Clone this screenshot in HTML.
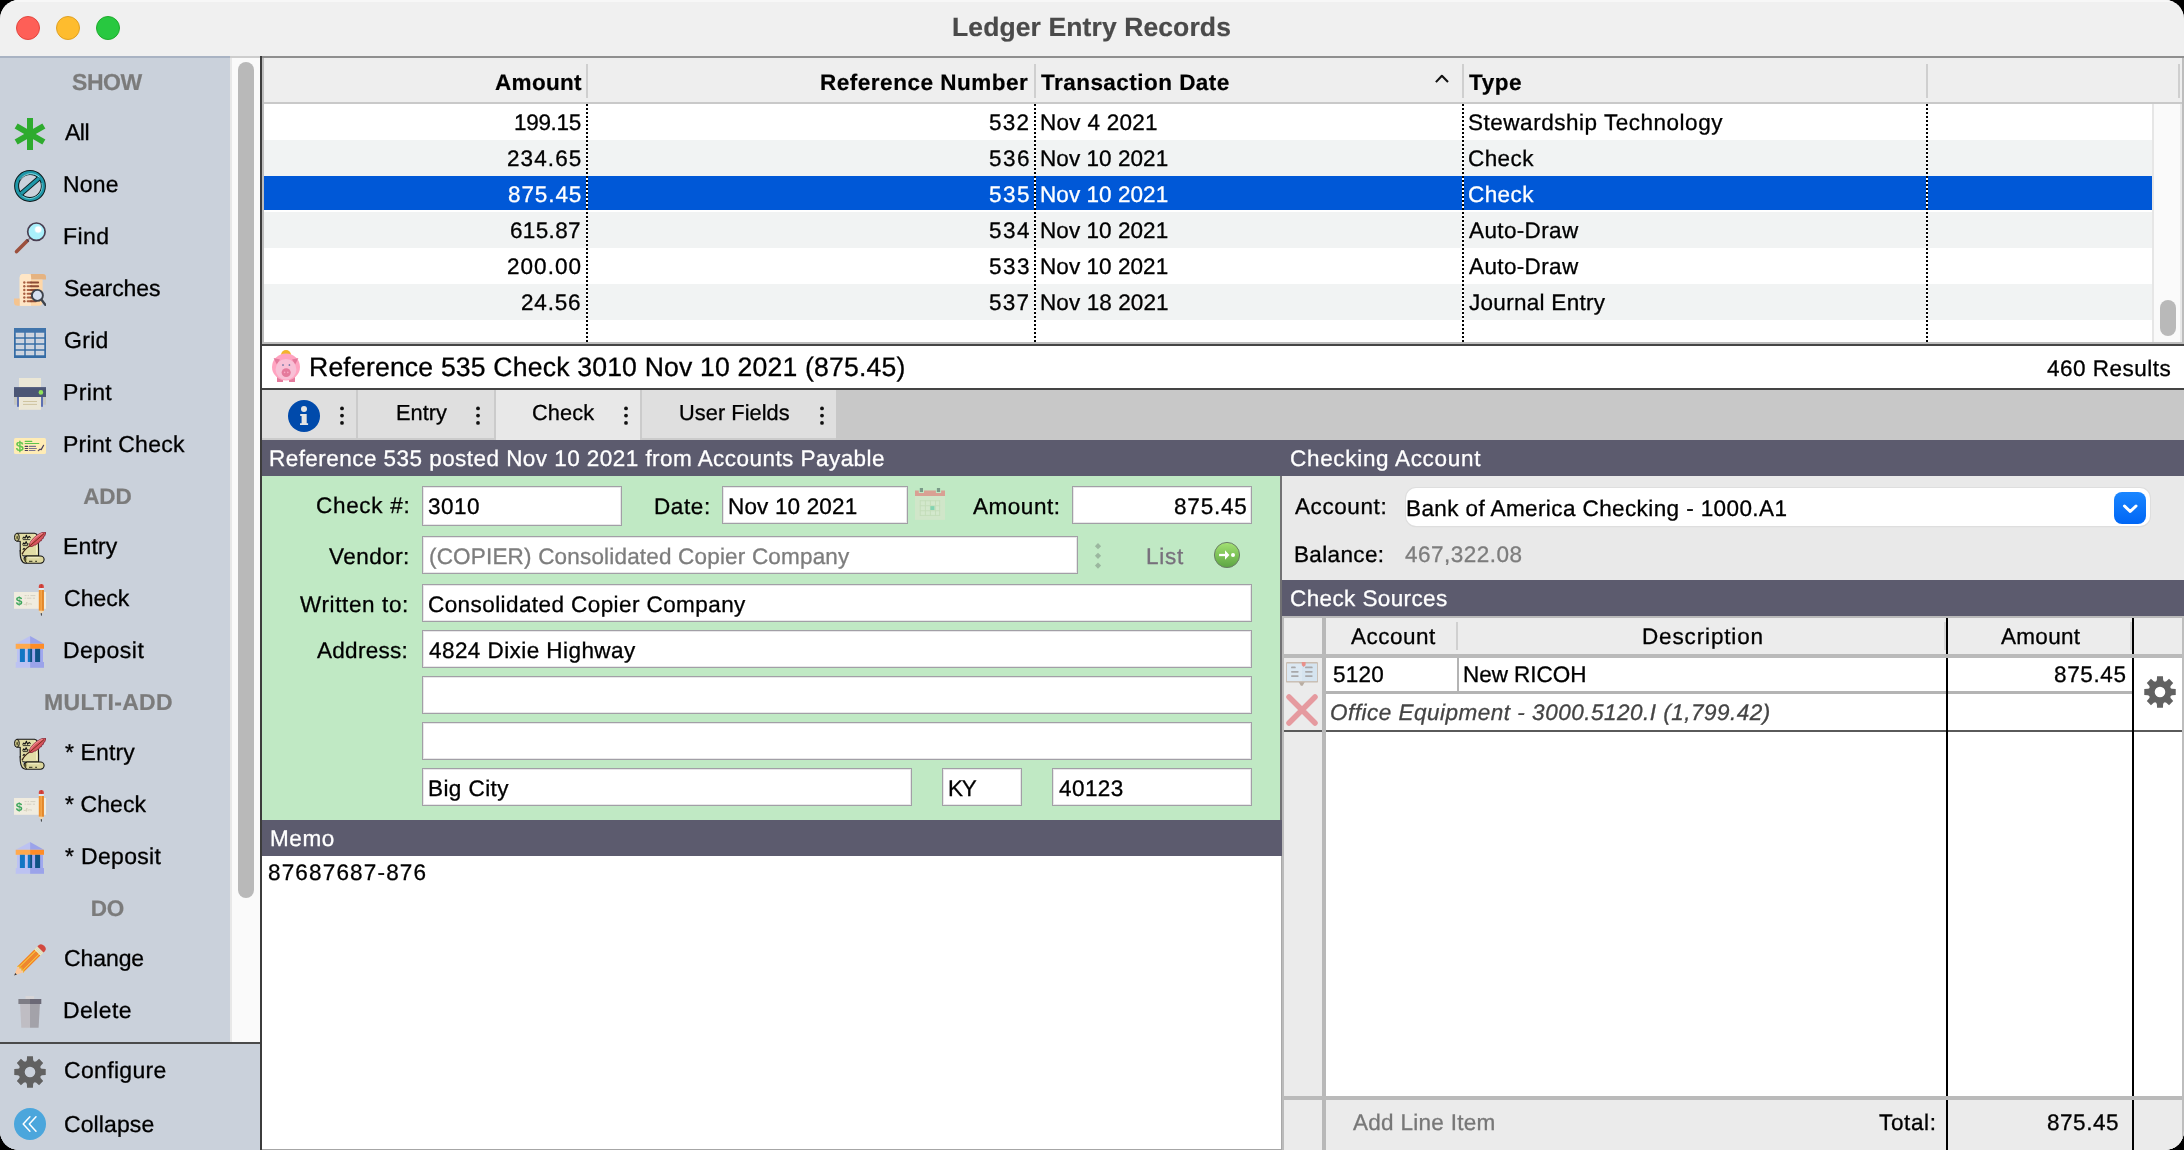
<!DOCTYPE html>
<html>
<head>
<meta charset="utf-8">
<title>Ledger Entry Records</title>
<style>
*{box-sizing:border-box;margin:0;padding:0}
html,body{width:2184px;height:1150px;background:#000;overflow:hidden}
body{font-family:"Liberation Sans",sans-serif;font-size:22.5px;color:#000;-webkit-font-smoothing:antialiased;text-rendering:geometricPrecision}
#win{position:absolute;left:0;top:0;width:2184px;height:1150px;background:#e9e9e9;border-radius:19px;overflow:hidden;will-change:transform}
.abs{position:absolute}
svg{display:block}
.t{position:absolute;white-space:nowrap;line-height:30px;height:30px;-webkit-text-stroke:0.3px}
.b{font-weight:bold;-webkit-text-stroke:0.2px}
.i{font-style:italic}
#titlebar{position:absolute;left:0;top:0;width:2184px;height:56px;background:#f0f0f0}
.tl{position:absolute;top:16px;width:24px;height:24px;border-radius:50%}
#sidebar{position:absolute;left:0;top:58px;width:230px;height:1092px;background:#cad1db}
.ic{position:absolute;left:14px;width:32px;height:32px}
.hsep{position:absolute;top:64px;width:2px;height:34px;background:#cfcfcf}
.dot{position:absolute;top:104px;width:2px;height:238px;background:repeating-linear-gradient(to bottom,#000 0,#000 2px,#fff 2px,#fff 4px)}
.bar{position:absolute;background:#5c5b6e;height:36px}
.inp{position:absolute;background:#fff;border:1px solid #a29fa6;box-shadow:inset 0 0 0 1px rgba(162,159,166,.25)}
</style>
</head>
<body>
<div id="win">
<div id="titlebar">
<div class="abs" style="left:0;top:0;width:100%;height:2px;background:#f7f7f7"></div>
<div class="tl" style="left:16px;background:#fe5f57;border:1px solid #e2463f"></div>
<div class="tl" style="left:56px;background:#febc2e;border:1px solid #dfa023"></div>
<div class="tl" style="left:96px;background:#28c840;border:1px solid #1eab2c"></div>
</div>
<div class="t b" id="title" style="left:952px;top:12px;font-size:26.5px;letter-spacing:0.106px;color:#4a4a4a;">Ledger Entry Records</div>
<div class="abs" style="left:0px;top:56px;width:230px;height:2px;background:#a9b3c3;"></div>
<div class="abs" style="left:230px;top:56px;width:30px;height:2px;background:#cdcdcd;"></div>
<div class="abs" style="left:260px;top:56px;width:1924px;height:2px;background:#8f8f8f;"></div>
<div id="sidebar"></div>
<div class="abs" style="left:0px;top:1044px;width:260px;height:106px;background:#cad1db;"></div>
<div class="ic" style="top:118px"><svg width="32" height="32" viewBox="0 0 32 32"><g fill="#2eab2e"><rect x="13" y="0" width="6" height="32"/><rect x="13" y="0" width="6" height="32" transform="rotate(60 16 16)"/><rect x="13" y="0" width="6" height="32" transform="rotate(120 16 16)"/></g></svg></div>
<div class="t " id="sb_All" style="left:65px;top:117px;font-size:23px;letter-spacing:-0.495px;">All</div>
<div class="ic" style="top:170px"><svg width="32" height="32" viewBox="0 0 32 32"><circle cx="16" cy="16" r="13.4" fill="none" stroke="#0c1a1c" stroke-width="5"/><path d="M7.2 23.6 L24.8 8.4" stroke="#0c1a1c" stroke-width="5.2"/><circle cx="16" cy="16" r="13.4" fill="none" stroke="#1f97a8" stroke-width="3"/><path d="M7 23.8 L25 8.2" stroke="#1f97a8" stroke-width="3.2"/><path d="M6.3 9.5 A12.6 12.6 0 0 1 25.5 7.2" fill="none" stroke="#9eeaf0" stroke-width="0.9"/><path d="M27.8 13 A12.6 12.6 0 0 1 8.5 26.3" fill="none" stroke="#9eeaf0" stroke-width="0.8" opacity=".8"/></svg></div>
<div class="t " id="sb_None" style="left:63px;top:169px;font-size:23px;letter-spacing:0.149px;">None</div>
<div class="ic" style="top:222px"><svg width="32" height="32" viewBox="0 0 32 32"><path d="M16.4 15.6 L13.5 18.5" stroke="#8c8fa0" stroke-width="1.6"/><path d="M13.3 18.8 L2.6 29.6" stroke="#9c503d" stroke-width="3.6" stroke-linecap="round"/><path d="M12.6 17.4 L14.8 19.6" stroke="#4a3f52" stroke-width="1.2"/><circle cx="22.4" cy="9.7" r="8.7" fill="#aaf0fb" stroke="#4a3f52" stroke-width="1.7"/><circle cx="24.2" cy="7.6" r="3" fill="#fff"/><circle cx="24.2" cy="7.6" r="3.8" fill="#fff" opacity=".35"/></svg></div>
<div class="t " id="sb_Find" style="left:63px;top:221px;font-size:23px;letter-spacing:0.399px;">Find</div>
<div class="ic" style="top:274px"><svg width="32" height="32" viewBox="0 0 32 32"><path d="M17 0 H29 A3 3 0 0 1 32 3 V5.6 H17Z" fill="#e5b381"/><path d="M10 0 H17 V5.6 H17 Z" fill="#f3cfa0"/><path d="M9.5 0 A3.8 3.8 0 0 0 5.7 3.8 V31.8 H17 V0Z" fill="#ffe6c6"/><path d="M10 0 H15 Q17.3 0.5 17.3 5.6 H17 V31.8 H25 A3.6 3.6 0 0 0 28.6 28 V5.6 H17 V0Z" fill="#ffd7a8"/><path d="M9.5 0 A3.8 3.8 0 0 0 5.7 3.8 V31.8 H17 V5.6 Q17 0.3 13.5 0Z" fill="#ffe6c6"/><path d="M0 24.6 H5.7 V31.8 H3.5 A3.5 3.5 0 0 1 0 28.3Z" fill="#f5c48f"/><g stroke="#a85f42" stroke-width="1.9" stroke-linecap="round"><path d="M13.6 8.5H17M13.6 12.2H17M13.6 16H17M13.6 19.7H17M13.6 23.5H17M13.6 27.2H17"/></g><g stroke="#8c4a35" stroke-width="1.9" stroke-linecap="round"><path d="M17 8.5H24.2M17 12.2H24.2M17 16H22M17 19.7H19M17 23.5H19M17 27.2H22"/></g><g fill="#a85f42"><circle cx="10.3" cy="8.5" r="1.2"/><circle cx="10.3" cy="12.2" r="1.2"/><circle cx="10.3" cy="16" r="1.2"/><circle cx="10.3" cy="19.7" r="1.2"/><circle cx="10.3" cy="23.5" r="1.2"/><circle cx="10.3" cy="27.2" r="1.2"/></g><path d="M27.3 25.6 L31.3 30.8" stroke="#3d434d" stroke-width="2.4" stroke-linecap="round"/><circle cx="23.4" cy="21.4" r="5.5" fill="#d6e0f0" stroke="#3d434d" stroke-width="1.9"/></svg></div>
<div class="t " id="sb_Searches" style="left:64px;top:273px;font-size:23px;letter-spacing:-0.108px;">Searches</div>
<div class="ic" style="top:327px"><svg width="32" height="32" viewBox="0 0 32 32"><rect x="0" y="1" width="32" height="30" fill="#356ca5"/><rect x="0" y="1" width="32" height="5.5" fill="#4074ab"/><g fill="#ccd3de" stroke="#d9dfe8" stroke-width="0.5"><rect x="2" y="6" width="8" height="4"/><rect x="12" y="6" width="8" height="4"/><rect x="22" y="6" width="8" height="4"/><rect x="2" y="12" width="8" height="4"/><rect x="12" y="12" width="8" height="4"/><rect x="22" y="12" width="8" height="4"/><rect x="2" y="18" width="8" height="4"/><rect x="12" y="18" width="8" height="4"/><rect x="22" y="18" width="8" height="4"/><rect x="2" y="24" width="8" height="4"/><rect x="12" y="24" width="8" height="4"/><rect x="22" y="24" width="8" height="4"/></g></svg></div>
<div class="t " id="sb_Grid" style="left:64px;top:325px;font-size:23px;letter-spacing:0.303px;">Grid</div>
<div class="ic" style="top:378px"><svg width="32" height="32" viewBox="0 0 32 32"><rect x="5" y="0" width="22" height="10" fill="#ebe7d6"/><rect x="0" y="19" width="3" height="7.7" fill="#c5c7c1"/><rect x="29" y="19" width="3" height="7.7" fill="#c5c7c1"/><rect x="3" y="19" width="2" height="9.8" fill="#5d70b3"/><rect x="27" y="19" width="2" height="9.8" fill="#5d70b3"/><rect x="5" y="19" width="22" height="12.8" fill="#ebe7d6"/><rect x="5" y="19" width="1.2" height="12.8" fill="#f3ecd2"/><rect x="0" y="9.2" width="32" height="9.8" fill="#4b5675"/><rect x="0" y="9.2" width="32" height="1" fill="#566182"/><circle cx="26.9" cy="14.4" r="2.3" fill="#90e35a"/><rect x="9" y="23" width="14" height="1" fill="#cfc4a0"/><rect x="9" y="25.9" width="14" height="1" fill="#cfc4a0"/></svg></div>
<div class="t " id="sb_Print" style="left:63px;top:377px;font-size:23px;letter-spacing:0.358px;">Print</div>
<div class="ic" style="top:430px"><svg width="32" height="32" viewBox="0 0 32 32"><rect x="0" y="8" width="32" height="16" rx="1.6" fill="#ffecb5"/><text x="5.7" y="20.9" font-family="Liberation Sans" font-size="13.5" fill="#5ec44a" stroke="#5ec44a" stroke-width="0.4" text-anchor="middle">$</text><g stroke="#5ec44a" stroke-width="1.1" stroke-linecap="round"><path d="M11.2 11.4H17.8M11.2 13.5H24.8"/></g><g stroke="#4a3f5c" stroke-width="1.1" stroke-linecap="round"><path d="M11.2 16.4H13.6M11.2 18.5H13.6M11.2 20.5H13.6"/></g><g stroke="#7a7590" stroke-width="1.1" stroke-linecap="round"><path d="M15.3 16.4H21.5M15.3 18.5H22.4M15.3 20.5H21"/></g><path d="M24.3 20.6 L26 19.2 L27.2 19.6 L29.6 15.3" fill="none" stroke="#4a3f5c" stroke-width="1.2" stroke-linecap="round" stroke-linejoin="round"/></svg></div>
<div class="t " id="sb_PrintCheck" style="left:63px;top:429px;font-size:23px;letter-spacing:0.260px;">Print Check</div>
<div class="ic" style="top:532px"><svg width="32" height="32" viewBox="0 0 32 32"><path d="M3 1.3 H20.5 Q23 1.6 23.6 4.2 Q24.8 12 24.6 24 H11 Q6.5 24 6.3 19 L6.2 9.3 H3.2 Z" fill="#e2dda6" stroke="#151515" stroke-width="1.1" stroke-linejoin="round"/><path d="M20 3 Q21.5 3.2 21.8 5 Q22.6 12 22.5 22" fill="none" stroke="#f2efc8" stroke-width="1"/><ellipse cx="2.9" cy="5.3" rx="2.4" ry="3.9" fill="#cdc78a" stroke="#151515" stroke-width="1"/><ellipse cx="3.2" cy="5.6" rx="0.9" ry="1.8" fill="#5e5a30"/><path d="M6.2 18 Q5.6 30.5 11.5 31.2 H26.5 A3.6 3.6 0 0 0 26.5 24 H13 Q10 24.2 10 27.5" fill="#dcd79e" stroke="#151515" stroke-width="1.1" stroke-linejoin="round"/><path d="M13 24.2 Q10.4 25 10.8 28 Q11.3 30.8 13 31" fill="#bdb77c" stroke="#151515" stroke-width="0.9"/><ellipse cx="11.3" cy="27.6" rx="0.9" ry="1.9" fill="#4e4a28"/><path d="M15 29.3 h3.4 M21.2 29.3 h1.8" stroke="#2a2a1a" stroke-width="1"/><path d="M14 25.7 H25.5" stroke="#f2efc8" stroke-width="1"/><g stroke="#111" stroke-width="1.05" fill="none" stroke-linejoin="round"><path d="M8.6 6.6 l1.2 -1.6 l1.2 1.2 l1.4 -3 l1.2 3 l1.6 -1.8 l1.4 1.4"/><path d="M8.8 7.6 h7.4" stroke-width="0.8"/><path d="M8.6 12.6 l1.2 -1.8 l1.1 1.4 l1.3 -2.6 l1.1 2.8 l1.2 -0.6"/><path d="M8.8 13.6 h5" stroke-width="0.8"/><path d="M8.8 17.8 l1.2 -1.6 l0.9 1.2"/></g><path d="M8.2 22.2 Q10 17.5 15.6 14" stroke="#3a2010" stroke-width="1.1" fill="none"/><path d="M15.2 14.2 L15.7 11.5 L17.4 8.6 L20.4 5.3 L23.9 2.7 L27.2 0.9 L29.8 0.2 L31.7 0.1 L31.4 2.1 L30.6 4.1 L29.7 4.4 L29.2 6.5 L28.2 6.6 L27.2 8.9 L26.1 8.9 L24.6 11.2 L23.5 11.2 L21.7 13.1 L20.6 13.1 L18.2 14.4 L15.5 14.6Z" fill="#d9555e" stroke="#7a2030" stroke-width="0.8" stroke-linejoin="round"/><path d="M16.7 11.0 L18.6 8.3 L21.7 5.2 L25.3 2.7 L28.3 1.2" fill="none" stroke="#ef8a8f" stroke-width="1.1" stroke-linecap="round"/><path d="M15.3 14.4 L30.1 1.5" stroke="#6e2a14" stroke-width="0.9"/></svg></div>
<div class="t " id="sb_Entry" style="left:63px;top:531px;font-size:23px;letter-spacing:0.152px;">Entry</div>
<div class="ic" style="top:584px"><svg width="32" height="32" viewBox="0 0 32 32"><rect x="0" y="8" width="32" height="16.8" fill="#f0ecdf"/><text x="5.1" y="20.9" font-family="Liberation Sans" font-weight="bold" font-size="12" fill="#3aa55a" text-anchor="middle">$</text><g stroke="#d2cfc2" stroke-width="1"><path d="M10.6 11.6h2M13.6 11.6h1.4M16.4 11.6h5M10.6 14.2h1.2M12.8 14.2h4.6M18.8 14.2h2.2"/></g><path d="M9.6 20.3 l2 0.3 l1.4 -2.6 l-0.6 3.6 M13.6 20.2 q2 -0.8 4.4 0" stroke="#d2cdb8" stroke-width="0.8" fill="none"/><path d="M24.8 2 Q24.8 0 27.3 0 Q29.8 0 29.8 2 V4 H24.8Z" fill="#d6453d"/><rect x="26.9" y="0.2" width="0.9" height="3.8" fill="#c23a33"/><rect x="24.8" y="4" width="5" height="2" fill="#dfe9ef"/><rect x="24.8" y="6" width="5" height="20.8" fill="#f0922e"/><rect x="26.7" y="6" width="1.1" height="20.8" fill="#f7b35c"/><rect x="27.8" y="6" width="2" height="20.8" fill="#e3872a"/><path d="M24.8 26.8 H29.8 L27.9 29.6 H26.7Z" fill="#f0d8b0"/><path d="M26.7 29.2 H27.9 L27.6 31.8 H27Z" fill="#222"/></svg></div>
<div class="t " id="sb_Check" style="left:64px;top:583px;font-size:23px;letter-spacing:0.026px;">Check</div>
<div class="ic" style="top:636px"><svg width="32" height="32" viewBox="0 0 32 32"><path d="M16.1 0 L1.7 7.8 H16.1Z" fill="#bcc2f2"/><path d="M16.1 0 L30 7.8 H16.1Z" fill="#9ba3ea"/><rect x="3" y="12.8" width="13.1" height="13.2" fill="#bcc2f2"/><rect x="16.1" y="12.8" width="12.9" height="13.2" fill="#a0a8ee"/><rect x="1.7" y="26" width="14.4" height="5.8" fill="#bcc2f2"/><rect x="16.1" y="26" width="13.9" height="5.8" fill="#9ba3ea"/><rect x="1.7" y="7.8" width="14.4" height="5" fill="#ffa94d"/><rect x="16.1" y="7.8" width="13.9" height="5" fill="#ff8c26"/><rect x="5.9" y="12.8" width="5" height="13.2" fill="#1176c4"/><rect x="13.8" y="12.8" width="2.3" height="13.2" fill="#1176c4"/><rect x="16.1" y="12.8" width="2" height="13.2" fill="#0f5285"/><rect x="21.1" y="12.8" width="5" height="13.2" fill="#0f5285"/></svg></div>
<div class="t " id="sb_Deposit" style="left:63px;top:635px;font-size:23px;letter-spacing:0.472px;">Deposit</div>
<div class="ic" style="top:738px"><svg width="32" height="32" viewBox="0 0 32 32"><path d="M3 1.3 H20.5 Q23 1.6 23.6 4.2 Q24.8 12 24.6 24 H11 Q6.5 24 6.3 19 L6.2 9.3 H3.2 Z" fill="#e2dda6" stroke="#151515" stroke-width="1.1" stroke-linejoin="round"/><path d="M20 3 Q21.5 3.2 21.8 5 Q22.6 12 22.5 22" fill="none" stroke="#f2efc8" stroke-width="1"/><ellipse cx="2.9" cy="5.3" rx="2.4" ry="3.9" fill="#cdc78a" stroke="#151515" stroke-width="1"/><ellipse cx="3.2" cy="5.6" rx="0.9" ry="1.8" fill="#5e5a30"/><path d="M6.2 18 Q5.6 30.5 11.5 31.2 H26.5 A3.6 3.6 0 0 0 26.5 24 H13 Q10 24.2 10 27.5" fill="#dcd79e" stroke="#151515" stroke-width="1.1" stroke-linejoin="round"/><path d="M13 24.2 Q10.4 25 10.8 28 Q11.3 30.8 13 31" fill="#bdb77c" stroke="#151515" stroke-width="0.9"/><ellipse cx="11.3" cy="27.6" rx="0.9" ry="1.9" fill="#4e4a28"/><path d="M15 29.3 h3.4 M21.2 29.3 h1.8" stroke="#2a2a1a" stroke-width="1"/><path d="M14 25.7 H25.5" stroke="#f2efc8" stroke-width="1"/><g stroke="#111" stroke-width="1.05" fill="none" stroke-linejoin="round"><path d="M8.6 6.6 l1.2 -1.6 l1.2 1.2 l1.4 -3 l1.2 3 l1.6 -1.8 l1.4 1.4"/><path d="M8.8 7.6 h7.4" stroke-width="0.8"/><path d="M8.6 12.6 l1.2 -1.8 l1.1 1.4 l1.3 -2.6 l1.1 2.8 l1.2 -0.6"/><path d="M8.8 13.6 h5" stroke-width="0.8"/><path d="M8.8 17.8 l1.2 -1.6 l0.9 1.2"/></g><path d="M8.2 22.2 Q10 17.5 15.6 14" stroke="#3a2010" stroke-width="1.1" fill="none"/><path d="M15.2 14.2 L15.7 11.5 L17.4 8.6 L20.4 5.3 L23.9 2.7 L27.2 0.9 L29.8 0.2 L31.7 0.1 L31.4 2.1 L30.6 4.1 L29.7 4.4 L29.2 6.5 L28.2 6.6 L27.2 8.9 L26.1 8.9 L24.6 11.2 L23.5 11.2 L21.7 13.1 L20.6 13.1 L18.2 14.4 L15.5 14.6Z" fill="#d9555e" stroke="#7a2030" stroke-width="0.8" stroke-linejoin="round"/><path d="M16.7 11.0 L18.6 8.3 L21.7 5.2 L25.3 2.7 L28.3 1.2" fill="none" stroke="#ef8a8f" stroke-width="1.1" stroke-linecap="round"/><path d="M15.3 14.4 L30.1 1.5" stroke="#6e2a14" stroke-width="0.9"/></svg></div>
<div class="t " id="sb_mEntry" style="left:65px;top:737px;font-size:23px;letter-spacing:0.120px;">* Entry</div>
<div class="ic" style="top:790px"><svg width="32" height="32" viewBox="0 0 32 32"><rect x="0" y="8" width="32" height="16.8" fill="#f0ecdf"/><text x="5.1" y="20.9" font-family="Liberation Sans" font-weight="bold" font-size="12" fill="#3aa55a" text-anchor="middle">$</text><g stroke="#d2cfc2" stroke-width="1"><path d="M10.6 11.6h2M13.6 11.6h1.4M16.4 11.6h5M10.6 14.2h1.2M12.8 14.2h4.6M18.8 14.2h2.2"/></g><path d="M9.6 20.3 l2 0.3 l1.4 -2.6 l-0.6 3.6 M13.6 20.2 q2 -0.8 4.4 0" stroke="#d2cdb8" stroke-width="0.8" fill="none"/><path d="M24.8 2 Q24.8 0 27.3 0 Q29.8 0 29.8 2 V4 H24.8Z" fill="#d6453d"/><rect x="26.9" y="0.2" width="0.9" height="3.8" fill="#c23a33"/><rect x="24.8" y="4" width="5" height="2" fill="#dfe9ef"/><rect x="24.8" y="6" width="5" height="20.8" fill="#f0922e"/><rect x="26.7" y="6" width="1.1" height="20.8" fill="#f7b35c"/><rect x="27.8" y="6" width="2" height="20.8" fill="#e3872a"/><path d="M24.8 26.8 H29.8 L27.9 29.6 H26.7Z" fill="#f0d8b0"/><path d="M26.7 29.2 H27.9 L27.6 31.8 H27Z" fill="#222"/></svg></div>
<div class="t " id="sb_mCheck" style="left:65px;top:789px;font-size:23px;letter-spacing:0.071px;">* Check</div>
<div class="ic" style="top:842px"><svg width="32" height="32" viewBox="0 0 32 32"><path d="M16.1 0 L1.7 7.8 H16.1Z" fill="#bcc2f2"/><path d="M16.1 0 L30 7.8 H16.1Z" fill="#9ba3ea"/><rect x="3" y="12.8" width="13.1" height="13.2" fill="#bcc2f2"/><rect x="16.1" y="12.8" width="12.9" height="13.2" fill="#a0a8ee"/><rect x="1.7" y="26" width="14.4" height="5.8" fill="#bcc2f2"/><rect x="16.1" y="26" width="13.9" height="5.8" fill="#9ba3ea"/><rect x="1.7" y="7.8" width="14.4" height="5" fill="#ffa94d"/><rect x="16.1" y="7.8" width="13.9" height="5" fill="#ff8c26"/><rect x="5.9" y="12.8" width="5" height="13.2" fill="#1176c4"/><rect x="13.8" y="12.8" width="2.3" height="13.2" fill="#1176c4"/><rect x="16.1" y="12.8" width="2" height="13.2" fill="#0f5285"/><rect x="21.1" y="12.8" width="5" height="13.2" fill="#0f5285"/></svg></div>
<div class="t " id="sb_mDeposit" style="left:65px;top:841px;font-size:23px;letter-spacing:0.323px;">* Deposit</div>
<div class="ic" style="top:944px"><svg width="32" height="32" viewBox="0 0 32 32" style="overflow:visible"><g transform="translate(0.2 31.6) rotate(-44.8) scale(0.935 1.16)"><path d="M0 0 L9.5 -3.6 V3.6Z" fill="#ffc89a"/><path d="M0 0 L2.8 -1.05 V1.05Z" fill="#2b3440"/><path d="M9.2 -3.6 L11.5 -2.4 L9.8 -1.2 L11.5 0 L9.8 1.2 L11.5 2.4 L9.2 3.6 H35 V-3.6Z" fill="#f58220"/><rect x="10.5" y="-2.5" width="24.5" height="0.9" fill="#f2c94c"/><rect x="10.5" y="1.6" width="24.5" height="0.9" fill="#f2c94c"/><rect x="10.8" y="-1.4" width="24.2" height="2.8" fill="#ee8630"/><path d="M9.2 -3.6 L11.6 -2.4 L9.9 -1.2 L11.6 0 L9.9 1.2 L11.6 2.4 L9.2 3.6" fill="none" stroke="#f0b429" stroke-width="0.9"/><rect x="35" y="-3.7" width="4.6" height="7.4" fill="#f5edb8"/><rect x="36.2" y="-3.7" width="0.9" height="7.4" fill="#cfd3c8"/><rect x="38" y="-3.7" width="0.9" height="7.4" fill="#cfd3c8"/><path d="M39.6 -3.7 H41.5 A3.7 3.7 0 0 1 41.5 3.7 H39.6Z" fill="#d2493f"/></g></svg></div>
<div class="t " id="sb_Change" style="left:64px;top:943px;font-size:23px;letter-spacing:-0.088px;">Change</div>
<div class="ic" style="top:996px"><svg width="32" height="32" viewBox="0 0 32 32"><rect x="11.5" y="0" width="8.7" height="3.2" fill="#d8d6d8"/><path d="M6.1 8 H16 V31.8 H7.3Z" fill="#bfbdc3"/><path d="M16 8 H25.9 L24.6 31.8 H16Z" fill="#a3a2a9"/><rect x="4.4" y="3" width="11.6" height="5" fill="#7e7d85"/><rect x="16" y="3" width="11.3" height="5" fill="#6b6976"/></svg></div>
<div class="t " id="sb_Delete" style="left:63px;top:995px;font-size:23px;letter-spacing:0.417px;">Delete</div>
<div class="ic" style="top:1056px"><svg width="32" height="32" viewBox="0 0 32 32"><path fill-rule="evenodd" fill="#616161" d="M12.85 3.90 L13.06 0.27 L18.94 0.27 L19.15 3.90 A2.20 2.20 0 0 0 22.32 5.22 L25.04 2.80 L29.20 6.96 L26.78 9.68 A2.20 2.20 0 0 0 28.10 12.85 L31.73 13.06 L31.73 18.94 L28.10 19.15 A2.20 2.20 0 0 0 26.78 22.32 L29.20 25.04 L25.04 29.20 L22.32 26.78 A2.20 2.20 0 0 0 19.15 28.10 L18.94 31.73 L13.06 31.73 L12.85 28.10 A2.20 2.20 0 0 0 9.68 26.78 L6.96 29.20 L2.80 25.04 L5.22 22.32 A2.20 2.20 0 0 0 3.90 19.15 L0.27 18.94 L0.27 13.06 L3.90 12.85 A2.20 2.20 0 0 0 5.22 9.68 L2.80 6.96 L6.96 2.80 L9.68 5.22 A2.20 2.20 0 0 0 12.85 3.90 Z M10.70 16.00 a5.30 5.30 0 1 0 10.60 0 a5.30 5.30 0 1 0 -10.60 0 Z"/></svg></div>
<div class="t " id="sb_Configure" style="left:64px;top:1055px;font-size:23px;letter-spacing:0.332px;">Configure</div>
<div class="ic" style="top:1108px"><svg width="32" height="32" viewBox="0 0 32 32"><circle cx="16" cy="16" r="16" fill="#4ba6dc"/><path d="M15.9 8.8 L9.2 16 L15.9 23.2 M22 8.8 L15.3 16 L22 23.2" fill="none" stroke="#fff" stroke-width="1.5" stroke-linecap="round" stroke-linejoin="round"/></svg></div>
<div class="t " id="sb_Collapse" style="left:64px;top:1109px;font-size:23px;letter-spacing:0.108px;">Collapse</div>
<div class="t b" id="sh_SHOW" style="left:72px;top:67px;font-size:23px;letter-spacing:-0.433px;color:#7b7b7b;">SHOW</div>
<div class="t b" id="sh_ADD" style="left:0;width:215px;text-align:center;top:482px;font-size:22.5px;color:#7b7b7b">ADD</div>
<div class="t b" id="sh_MULTI-ADD" style="left:44px;top:687px;font-size:23px;letter-spacing:0.322px;color:#7b7b7b;">MULTI-ADD</div>
<div class="t b" id="sh_DO" style="left:0;width:215px;text-align:center;top:894px;font-size:22.5px;color:#7b7b7b">DO</div>
<div class="abs" style="left:230px;top:58px;width:30px;height:984px;background:#fafafa;border-left:2px solid #e8e8e8"></div>
<div class="abs" style="left:238px;top:62px;width:16px;height:836px;background:#b9b9b9;border-radius:8px"></div>
<div class="abs" style="left:0px;top:1042px;width:260px;height:2px;background:#4a4a4a;"></div>
<div class="abs" style="left:260px;top:56px;width:2px;height:1094px;background:#3c3c3c;"></div>
<div class="abs" style="left:262px;top:58px;width:1922px;height:286px;background:#fff;"></div>
<div class="abs" style="left:262px;top:58px;width:1922px;height:44px;background:#eeeeee;"></div>
<div class="abs" style="left:262px;top:102px;width:1922px;height:2px;background:#c9c9c9;"></div>
<div class="abs" style="left:264px;top:140px;width:1888px;height:36px;background:#f1f3f3;"></div>
<div class="abs" style="left:264px;top:176px;width:1888px;height:34px;background:#0058d7;"></div>
<div class="abs" style="left:264px;top:212px;width:1888px;height:36px;background:#f1f3f3;"></div>
<div class="abs" style="left:264px;top:284px;width:1888px;height:36px;background:#f1f3f3;"></div>
<div class="dot" style="left:586px"></div>
<div class="hsep" style="left:586px"></div>
<div class="dot" style="left:1034px"></div>
<div class="hsep" style="left:1034px"></div>
<div class="dot" style="left:1462px"></div>
<div class="hsep" style="left:1462px"></div>
<div class="dot" style="left:1926px"></div>
<div class="hsep" style="left:1926px"></div>
<div class="t " id="r0a" style="left:514px;top:108px;font-size:22.5px;letter-spacing:-0.320px;">199.15</div>
<div class="t " id="r0b" style="left:989px;top:108px;font-size:22.5px;letter-spacing:1.235px;">532</div>
<div class="t " id="r0c" style="left:1040px;top:108px;font-size:22.5px;letter-spacing:0.283px;">Nov 4 2021</div>
<div class="t " id="r0d" style="left:1468px;top:108px;font-size:22.5px;letter-spacing:0.521px;">Stewardship Technology</div>
<div class="t " id="r1a" style="left:507px;top:144px;font-size:22.5px;letter-spacing:1.087px;">234.65</div>
<div class="t " id="r1b" style="left:989px;top:144px;font-size:22.5px;letter-spacing:1.435px;">536</div>
<div class="t " id="r1c" style="left:1040px;top:144px;font-size:22.5px;letter-spacing:0.058px;">Nov 10 2021</div>
<div class="t " id="r1d" style="left:1468px;top:144px;font-size:22.5px;letter-spacing:0.405px;">Check</div>
<div class="t " id="r2a" style="left:508px;top:180px;font-size:22.5px;letter-spacing:0.909px;color:#fff;">875.45</div>
<div class="t " id="r2b" style="left:989px;top:180px;font-size:22.5px;letter-spacing:1.485px;color:#fff;">535</div>
<div class="t " id="r2c" style="left:1040px;top:180px;font-size:22.5px;letter-spacing:0.058px;color:#fff;">Nov 10 2021</div>
<div class="t " id="r2d" style="left:1468px;top:180px;font-size:22.5px;letter-spacing:0.405px;color:#fff;">Check</div>
<div class="t " id="r3a" style="left:510px;top:216px;font-size:22.5px;letter-spacing:0.340px;">615.87</div>
<div class="t " id="r3b" style="left:989px;top:216px;font-size:22.5px;letter-spacing:1.429px;">534</div>
<div class="t " id="r3c" style="left:1040px;top:216px;font-size:22.5px;letter-spacing:0.058px;">Nov 10 2021</div>
<div class="t " id="r3d" style="left:1469px;top:216px;font-size:22.5px;letter-spacing:0.369px;">Auto-Draw</div>
<div class="t " id="r4a" style="left:507px;top:252px;font-size:22.5px;letter-spacing:1.047px;">200.00</div>
<div class="t " id="r4b" style="left:989px;top:252px;font-size:22.5px;letter-spacing:1.485px;">533</div>
<div class="t " id="r4c" style="left:1040px;top:252px;font-size:22.5px;letter-spacing:0.058px;">Nov 10 2021</div>
<div class="t " id="r4d" style="left:1469px;top:252px;font-size:22.5px;letter-spacing:0.369px;">Auto-Draw</div>
<div class="t " id="r5a" style="left:521px;top:288px;font-size:22.5px;letter-spacing:0.818px;">24.56</div>
<div class="t " id="r5b" style="left:989px;top:288px;font-size:22.5px;letter-spacing:1.235px;">537</div>
<div class="t " id="r5c" style="left:1040px;top:288px;font-size:22.5px;letter-spacing:0.099px;">Nov 18 2021</div>
<div class="t " id="r5d" style="left:1469px;top:288px;font-size:22.5px;letter-spacing:0.290px;">Journal Entry</div>
<div class="hsep" style="left:2178px"></div>
<div class="t b" id="h_amt" style="left:495px;top:68px;font-size:22.5px;letter-spacing:0.320px;">Amount</div>
<div class="t b" id="h_ref" style="left:820px;top:68px;font-size:22.5px;letter-spacing:0.519px;">Reference Number</div>
<div class="t b" id="h_date" style="left:1041px;top:68px;font-size:22.5px;letter-spacing:0.467px;">Transaction Date</div>
<div class="t b" id="h_type" style="left:1469px;top:68px;font-size:22.5px;letter-spacing:0.560px;">Type</div>
<div class="abs" style="left:1434px;top:72px"><svg width="16" height="12" viewBox="0 0 16 12"><path d="M1.9 10.1 L7.9 3.8 L14 10.1" fill="none" stroke="#111" stroke-width="2.1" stroke-linejoin="round"/></svg></div>
<div class="abs" style="left:2152px;top:104px;width:30px;height:238px;background:#fafafa;border-left:2px solid #e6e6e6"></div>
<div class="abs" style="left:2180px;top:104px;width:2px;height:238px;background:#e8e8e8;"></div>
<div class="abs" style="left:2160px;top:300px;width:16px;height:36px;background:#b9b9b9;border-radius:8px"></div>
<div class="abs" style="left:262px;top:58px;width:2px;height:286px;background:#bdbdbd;"></div>
<div class="abs" style="left:2182px;top:58px;width:2px;height:286px;background:#bdbdbd;"></div>
<div class="abs" style="left:262px;top:342px;width:1922px;height:2px;background:#bdbdbd;"></div>
<div class="abs" style="left:262px;top:344px;width:1922px;height:2px;background:#444;"></div>
<div class="abs" style="left:262px;top:346px;width:1922px;height:42px;background:#fff;"></div>
<div class="abs" style="left:262px;top:388px;width:1922px;height:2px;background:#444;"></div>
<div class="abs" id="pig" style="left:272px;top:350px"><svg width="28" height="32" viewBox="0 0 28 32"><circle cx="14" cy="5" r="5" fill="#f3b32d"/><rect x="5" y="26" width="6" height="6" rx="0.6" fill="#e47a9c"/><rect x="17" y="26" width="6" height="6" rx="0.6" fill="#e47a9c"/><ellipse cx="14" cy="17" rx="14" ry="13.5" fill="#ffa3c0"/><path d="M1.6 8 L8 9.4 L4.8 14.6Z" fill="#e47a9c"/><path d="M26.4 8 L20 9.4 L23.2 14.6Z" fill="#e47a9c"/><path d="M9 5.6 H19 V6.6 H9Z" fill="#ffa3c0"/><circle cx="14" cy="19.4" r="10.4" fill="#f8c0d6"/><ellipse cx="14.2" cy="22.6" rx="4.6" ry="4.3" fill="#e47a9c"/><circle cx="12.6" cy="22.4" r="0.8" fill="#f8a8c4"/><circle cx="15.8" cy="22.4" r="0.8" fill="#f8a8c4"/><rect x="10.2" y="14.3" width="1.6" height="1.5" rx="0.5" fill="#5a6a9a"/><rect x="16.6" y="14.3" width="1.6" height="1.5" rx="0.5" fill="#5a6a9a"/></svg></div>
<div class="t " id="infotext" style="left:309px;top:352px;font-size:26.6px;letter-spacing:0.179px;">Reference 535 Check 3010 Nov 10 2021 (875.45)</div>
<div class="t " id="results" style="left:2047px;top:354px;font-size:22.5px;letter-spacing:0.505px;">460 Results</div>
<div class="abs" style="left:262px;top:390px;width:1922px;height:50px;background:#c8c8c8;"></div>
<div class="abs" style="left:262px;top:390px;width:94px;height:48px;background:#dfdfdf;"></div>
<div class="abs" style="left:262px;top:438px;width:96px;height:2px;background:#cbcbcb;"></div>
<div class="abs" style="left:356px;top:390px;width:2px;height:50px;background:#cbcbcb;"></div>
<div class="abs" style="left:358px;top:390px;width:136px;height:48px;background:#dfdfdf;"></div>
<div class="abs" style="left:358px;top:438px;width:138px;height:2px;background:#cbcbcb;"></div>
<div class="abs" style="left:494px;top:390px;width:2px;height:50px;background:#cbcbcb;"></div>
<div class="abs" style="left:496px;top:390px;width:144px;height:50px;background:#e8e8e8;"></div>
<div class="abs" style="left:640px;top:390px;width:2px;height:50px;background:#cbcbcb;"></div>
<div class="abs" style="left:642px;top:390px;width:194px;height:48px;background:#dfdfdf;"></div>
<div class="abs" style="left:642px;top:438px;width:194px;height:2px;background:#cbcbcb;"></div>
<div class="t " id="tab1" style="left:396px;top:398px;font-size:21.75px;letter-spacing:0.053px;">Entry</div>
<div class="t " id="tab2" style="left:532px;top:398px;font-size:21.75px;letter-spacing:0.135px;">Check</div>
<div class="t " id="tab3" style="left:679px;top:398px;font-size:21.75px;letter-spacing:0.068px;">User Fields</div>
<div class="abs" style="left:340px;top:406px"><svg width="4" height="20" viewBox="0 0 4 20"><circle cx="2" cy="2.4" r="1.9" fill="#111"/><circle cx="2" cy="9.6" r="1.9" fill="#111"/><circle cx="2" cy="16.9" r="1.9" fill="#111"/></svg></div>
<div class="abs" style="left:476px;top:406px"><svg width="4" height="20" viewBox="0 0 4 20"><circle cx="2" cy="2.4" r="1.9" fill="#111"/><circle cx="2" cy="9.6" r="1.9" fill="#111"/><circle cx="2" cy="16.9" r="1.9" fill="#111"/></svg></div>
<div class="abs" style="left:624px;top:406px"><svg width="4" height="20" viewBox="0 0 4 20"><circle cx="2" cy="2.4" r="1.9" fill="#111"/><circle cx="2" cy="9.6" r="1.9" fill="#111"/><circle cx="2" cy="16.9" r="1.9" fill="#111"/></svg></div>
<div class="abs" style="left:820px;top:406px"><svg width="4" height="20" viewBox="0 0 4 20"><circle cx="2" cy="2.4" r="1.9" fill="#111"/><circle cx="2" cy="9.6" r="1.9" fill="#111"/><circle cx="2" cy="16.9" r="1.9" fill="#111"/></svg></div>
<div class="abs" id="infoic" style="left:288px;top:400px"><svg width="32" height="32" viewBox="0 0 32 32"><circle cx="16" cy="16" r="16" fill="#004aab"/><circle cx="16" cy="9.1" r="3" fill="#e4e4e4"/><path d="M12.2 14.1 H18.7 V23.2 H20.1 V25 H12 V23.2 H13.6 V16 H12.2Z" fill="#e4e4e4"/></svg></div>
<div class="abs" style="left:262px;top:440px;width:1922px;height:36px;background:#5c5b6e;"></div>
<div class="t " id="bar1" style="left:269px;top:444px;font-size:22.5px;letter-spacing:0.451px;color:#fff;">Reference 535 posted Nov 10 2021 from Accounts Payable</div>
<div class="t " id="bar2" style="left:1290px;top:444px;font-size:22.5px;letter-spacing:0.686px;color:#fff;">Checking Account</div>
<div class="abs" style="left:262px;top:476px;width:1018px;height:344px;background:#c0e9c4;"></div>
<div class="inp" style="left:422px;top:486px;width:200px;height:40px"></div>
<div class="t " id="i_chk" style="left:428px;top:492px;font-size:22.5px;letter-spacing:0.506px;">3010</div>
<div class="inp" style="left:722px;top:486px;width:186px;height:38px"></div>
<div class="t " id="i_date" style="left:728px;top:492px;font-size:22.5px;letter-spacing:0.155px;">Nov 10 2021</div>
<div class="inp" style="left:1072px;top:486px;width:180px;height:38px"></div>
<div class="t " id="i_amt" style="left:1174px;top:492px;font-size:22.5px;letter-spacing:0.809px;">875.45</div>
<div class="inp" style="left:422px;top:536px;width:656px;height:38px"></div>
<div class="t " id="i_vendor" style="left:429px;top:542px;font-size:22.5px;letter-spacing:0.182px;color:#7d7d7d;">(COPIER) Consolidated Copier Company</div>
<div class="inp" style="left:422px;top:584px;width:830px;height:38px"></div>
<div class="t " id="i_written" style="left:428px;top:590px;font-size:22.5px;letter-spacing:0.419px;">Consolidated Copier Company</div>
<div class="inp" style="left:422px;top:630px;width:830px;height:38px"></div>
<div class="t " id="i_addr" style="left:429px;top:636px;font-size:22.5px;letter-spacing:0.434px;">4824 Dixie Highway</div>
<div class="inp" style="left:422px;top:676px;width:830px;height:38px"></div>
<div class="inp" style="left:422px;top:722px;width:830px;height:38px"></div>
<div class="inp" style="left:422px;top:768px;width:490px;height:38px"></div>
<div class="t " id="i_city" style="left:428px;top:774px;font-size:22.5px;letter-spacing:0.428px;">Big City</div>
<div class="inp" style="left:942px;top:768px;width:80px;height:38px"></div>
<div class="t " id="i_state" style="left:948px;top:774px;font-size:22.5px;letter-spacing:-1.200px;">KY</div>
<div class="inp" style="left:1052px;top:768px;width:200px;height:38px"></div>
<div class="t " id="i_zip" style="left:1059px;top:774px;font-size:22.5px;letter-spacing:0.425px;">40123</div>
<div class="t " id="l_chk" style="left:316px;top:491px;font-size:22.5px;letter-spacing:0.693px;">Check #:</div>
<div class="t " id="l_date" style="left:654px;top:492px;font-size:22.5px;letter-spacing:0.597px;">Date:</div>
<div class="t " id="l_amt" style="left:973px;top:492px;font-size:22.5px;letter-spacing:0.525px;">Amount:</div>
<div class="t " id="l_vendor" style="left:329px;top:542px;font-size:22.5px;letter-spacing:0.462px;">Vendor:</div>
<div class="t " id="l_written" style="left:300px;top:590px;font-size:22.5px;letter-spacing:0.623px;">Written to:</div>
<div class="t " id="l_addr" style="left:317px;top:636px;font-size:22.5px;letter-spacing:0.293px;">Address:</div>
<div class="abs" id="cal" style="left:915px;top:488px"><svg width="30" height="32" viewBox="0 0 30 32"><rect x="0" y="7.9" width="30" height="24" fill="#d0e6c9"/><rect x="0" y="2.5" width="30" height="5.5" fill="#d9a093"/><rect x="3.8" y="0" width="5.2" height="5" fill="#c0e9c4"/><rect x="20.9" y="0" width="5.2" height="5" fill="#c0e9c4"/><rect x="4.8" y="0" width="3.2" height="4" fill="#7a9a88"/><rect x="21.9" y="0" width="3.2" height="4" fill="#7a9a88"/><rect x="4.8" y="12.3" width="20.3" height="15.4" fill="#d3e8cc"/><rect x="4.8" y="12.3" width="0.9" height="15.4" fill="#c3ddb9"/><rect x="9.9" y="12.3" width="0.9" height="15.4" fill="#c3ddb9"/><rect x="14.9" y="12.3" width="0.9" height="15.4" fill="#c3ddb9"/><rect x="20.0" y="12.3" width="0.9" height="15.4" fill="#c3ddb9"/><rect x="24.2" y="12.3" width="0.9" height="15.4" fill="#c3ddb9"/><rect x="4.8" y="12.3" width="20.3" height="0.9" fill="#c3ddb9"/><rect x="4.8" y="17.3" width="20.3" height="0.9" fill="#c3ddb9"/><rect x="4.8" y="22.3" width="20.3" height="0.9" fill="#c3ddb9"/><rect x="4.8" y="26.9" width="20.3" height="0.9" fill="#c3ddb9"/><rect x="15.4" y="18.1" width="4.1" height="3.9" fill="#82d3b0"/></svg></div>
<div class="abs" style="left:1093px;top:541px"><svg width="10" height="30" viewBox="0 0 10 30"><g fill="#9bb79f"><path d="M5 2.1 L8.1 5.2 L5 8.3 L1.9 5.2Z"/><path d="M5 11.7 L8.1 14.8 L5 17.9 L1.9 14.8Z"/><path d="M5 21.5 L8.1 24.6 L5 27.7 L1.9 24.6Z"/></g></svg></div>
<div class="t " id="l_list" style="left:1146px;top:542px;font-size:22.5px;letter-spacing:0.758px;color:#77707c;">List</div>
<div class="abs" id="goarrow" style="left:1213px;top:541px"><svg width="28" height="28" viewBox="0 0 28 28"><defs><linearGradient id="gg" x1="0" y1="0" x2="0" y2="1"><stop offset="0" stop-color="#a4e174"/><stop offset="0.5" stop-color="#7fc458"/><stop offset="1" stop-color="#5ca443"/></linearGradient></defs><circle cx="14" cy="14" r="12.6" fill="url(#gg)" stroke="#6b7f68" stroke-width="1"/><rect x="6.1" y="12.85" width="6.2" height="2.3" fill="#fff"/><path d="M12 9.2 L16.4 14 L12 18.8Z" fill="#fff"/><circle cx="20" cy="14" r="2" fill="#fff"/></svg></div>
<div class="abs" style="left:262px;top:820px;width:1020px;height:36px;background:#5c5b6e;"></div>
<div class="t " id="bar_memo" style="left:270px;top:824px;font-size:22.5px;letter-spacing:0.563px;color:#fff;">Memo</div>
<div class="abs" style="left:262px;top:856px;width:1019px;height:294px;background:#fff;"></div>
<div class="t " id="memotext" style="left:268px;top:858px;font-size:22.5px;letter-spacing:1.174px;">87687687-876</div>
<div class="abs" style="left:1280px;top:476px;width:2px;height:344px;background:#727274;"></div>
<div class="abs" style="left:1281px;top:856px;width:1px;height:294px;background:#a8a8a8;"></div>
<div class="abs" style="left:262px;top:1149px;width:1020px;height:1px;background:#a6a6a6;"></div>
<div class="abs" style="left:1282px;top:476px;width:902px;height:104px;background:#e9e9e9;"></div>
<div class="t " id="l_acct" style="left:1295px;top:492px;font-size:22.5px;letter-spacing:0.586px;">Account:</div>
<div class="t " id="l_bal" style="left:1294px;top:540px;font-size:22.5px;letter-spacing:0.363px;">Balance:</div>
<div class="t " id="v_bal" style="left:1405px;top:540px;font-size:22.5px;letter-spacing:0.478px;color:#7d7d7d;">467,322.08</div>
<div class="abs" style="left:1406px;top:488px;width:744px;height:38px;background:#fff;border-radius:10px;box-shadow:0 0 0 1px #dedede, 0 1px 1px rgba(0,0,0,.12)"></div>
<div class="t " id="v_acct" style="left:1406px;top:494px;font-size:22.5px;letter-spacing:0.400px;">Bank of America Checking - 1000.A1</div>
<div class="abs" style="left:2114px;top:492px;width:32px;height:32px;border-radius:8px;background:linear-gradient(#1a86ff,#0066f5)"><svg width="32" height="32" viewBox="0 0 32 32"><path d="M10.5 14 L16.2 19.5 L22 14" fill="none" stroke="#fff" stroke-width="3" stroke-linecap="round" stroke-linejoin="round"/></svg></div>
<div class="abs" style="left:1282px;top:580px;width:902px;height:36px;background:#5c5b6e;"></div>
<div class="t " id="bar3" style="left:1290px;top:584px;font-size:22.5px;letter-spacing:0.392px;color:#fff;">Check Sources</div>
<div class="abs" style="left:1282px;top:616px;width:902px;height:534px;background:#fff;"></div>
<div class="abs" style="left:1282px;top:616px;width:902px;height:2px;background:#bababa;"></div>
<div class="abs" style="left:1284px;top:618px;width:898px;height:36px;background:#ececec;"></div>
<div class="abs" style="left:1284px;top:658px;width:38px;height:492px;background:#ebebeb;"></div>
<div class="abs" style="left:1326px;top:691px;width:806px;height:3px;background:#b4b4b4;"></div>
<div class="abs" style="left:1457px;top:658px;width:2px;height:33px;background:#b4b4b4;"></div>
<div class="abs" style="left:1456px;top:622px;width:2px;height:28px;background:#d0d0d0;"></div>
<div class="abs" style="left:1944px;top:622px;width:2px;height:28px;background:#d6d6d6;"></div>
<div class="abs" style="left:2130px;top:622px;width:2px;height:28px;background:#d6d6d6;"></div>
<div class="abs" style="left:1284px;top:730px;width:898px;height:2px;background:#5a5a5a;"></div>
<div class="abs" style="left:1322px;top:618px;width:4px;height:532px;background:#b8b8b8;"></div>
<div class="abs" style="left:1326px;top:1100px;width:856px;height:50px;background:#ebebeb;"></div>
<div class="abs" style="left:1946px;top:618px;width:2px;height:532px;background:#000;"></div>
<div class="abs" style="left:2132px;top:618px;width:2px;height:532px;background:#000;"></div>
<div class="abs" style="left:1284px;top:654px;width:898px;height:4px;background:#bababa;"></div>
<div class="abs" style="left:1284px;top:1096px;width:898px;height:4px;background:#bababa;"></div>
<div class="abs" style="left:2182px;top:616px;width:2px;height:534px;background:#bdbdbd;"></div>
<div class="abs" style="left:1282px;top:616px;width:2px;height:534px;background:#bbbbbb;"></div>
<div class="t " id="th_acct" style="left:1351px;top:622px;font-size:22.5px;letter-spacing:0.499px;">Account</div>
<div class="t " id="th_desc" style="left:1642px;top:622px;font-size:22.5px;letter-spacing:0.855px;">Description</div>
<div class="t " id="th_amt" style="left:2001px;top:622px;font-size:22.5px;letter-spacing:0.311px;">Amount</div>
<div class="t " id="c_acct" style="left:1333px;top:660px;font-size:22.5px;letter-spacing:0.233px;">5120</div>
<div class="t " id="c_desc" style="left:1463px;top:660px;font-size:22.5px;letter-spacing:-0.048px;">New RICOH</div>
<div class="t " id="c_amt" style="left:2054px;top:660px;font-size:22.5px;letter-spacing:0.642px;">875.45</div>
<div class="t i" id="c_ital" style="left:1330px;top:698px;font-size:22.5px;letter-spacing:0.502px;color:#444;">Office Equipment - 3000.5120.I (1,799.42)</div>
<div class="t " id="f_add" style="left:1353px;top:1108px;font-size:22.5px;letter-spacing:0.288px;color:#777;">Add Line Item</div>
<div class="t " id="f_total" style="left:1879px;top:1108px;font-size:22.5px;letter-spacing:0.640px;">Total:</div>
<div class="t " id="f_amt" style="left:2047px;top:1108px;font-size:22.5px;letter-spacing:0.529px;">875.45</div>
<div class="abs" id="book" style="left:1286px;top:662px"><svg width="32" height="24" viewBox="0 0 32 24"><path d="M12.7 20 H18.8 L16.6 23.8 H14.9Z" fill="#b8ada2"/><rect x="0" y="0" width="32" height="20.6" rx="1.2" fill="#c8bcb0"/><rect x="0.9" y="1.5" width="15.1" height="17.6" fill="#dce8f2"/><rect x="16" y="1.5" width="15.1" height="17.6" fill="#d5e4f0"/><path d="M15.8 0 H19.6 V3.2 L17.7 4.9 L15.8 3.2Z" fill="#e8908a"/><g stroke="#a8a8aa" stroke-width="1.8" stroke-linecap="round"><path d="M5.9 5.4H8.9M5.9 9.8H11.8M5.9 14.1H11.8M19.9 5.4H25.8M19.9 9.8H25.8M19.9 14.1H25.8"/></g></svg></div>
<div class="abs" id="redx" style="left:1286px;top:694px"><svg width="32" height="32" viewBox="0 0 32 32"><path d="M3 3 L29 29 M29 3 L3 29" stroke="#e59a9f" stroke-width="5.5" stroke-linecap="round"/></svg></div>
<div class="abs" id="gear2" style="left:2144px;top:676px"><svg width="32" height="32" viewBox="0 0 32 32"><path fill-rule="evenodd" fill="#616161" d="M12.85 3.90 L13.06 0.27 L18.94 0.27 L19.15 3.90 A2.20 2.20 0 0 0 22.32 5.22 L25.04 2.80 L29.20 6.96 L26.78 9.68 A2.20 2.20 0 0 0 28.10 12.85 L31.73 13.06 L31.73 18.94 L28.10 19.15 A2.20 2.20 0 0 0 26.78 22.32 L29.20 25.04 L25.04 29.20 L22.32 26.78 A2.20 2.20 0 0 0 19.15 28.10 L18.94 31.73 L13.06 31.73 L12.85 28.10 A2.20 2.20 0 0 0 9.68 26.78 L6.96 29.20 L2.80 25.04 L5.22 22.32 A2.20 2.20 0 0 0 3.90 19.15 L0.27 18.94 L0.27 13.06 L3.90 12.85 A2.20 2.20 0 0 0 5.22 9.68 L2.80 6.96 L6.96 2.80 L9.68 5.22 A2.20 2.20 0 0 0 12.85 3.90 Z M10.70 16.00 a5.30 5.30 0 1 0 10.60 0 a5.30 5.30 0 1 0 -10.60 0 Z"/></svg></div>
</div>
</body>
</html>
